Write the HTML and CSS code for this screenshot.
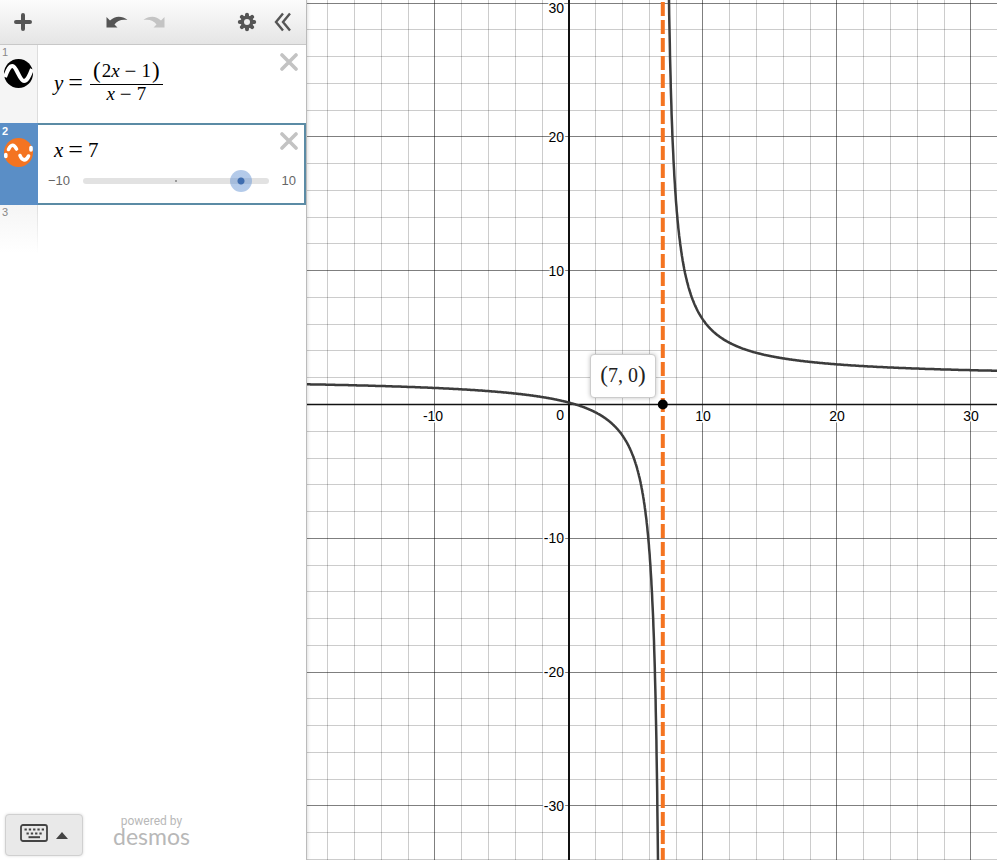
FILE: index.html
```html
<!DOCTYPE html>
<html lang="en">
<head>
<meta charset="utf-8">
<title>Graphing Calculator</title>
<meta name="viewport" content="width=device-width, initial-scale=1">
<link rel="stylesheet" href="styles.css">
</head>
<body>
<div class="calculator">
  <aside class="panel">
    <header class="toolbar">
      <button class="tool" type="button" aria-label="Add item">
        <svg width="18" height="18" viewBox="0 0 18 18"><path d="M9 2v14M2 9h14" stroke="#555" stroke-width="4" stroke-linecap="round"/></svg>
      </button>
      <div class="history">
        <button class="tool" type="button" aria-label="Undo">
          <svg width="22" height="14" viewBox="0 0 22 14"><path d="M.5 2V12.500H11.500L8.500 9.500C11 5.500 16 4 21.500 5C16 .5 9 .5 4 5.500Z" fill="#555"/></svg>
        </button>
        <button class="tool" type="button" aria-label="Redo" disabled>
          <svg width="22" height="14" viewBox="0 0 22 14"><path d="M21.500 2V12.500H10.500L13.500 9.500C11 5.500 6 4 .5 5C6 .5 13 .5 18 5.500Z" fill="#c4c4c4"/></svg>
        </button>
      </div>
      <div class="options">
        <button class="tool" type="button" aria-label="Settings">
          <svg width="20" height="20" viewBox="-10 -10 20 20">
            <path d="M0-7.200V7.200M-7.200 0H7.200M-5.100-5.100L5.100 5.100M5.100-5.100L-5.100 5.100" stroke="#555" stroke-width="4" stroke-linecap="round"/>
            <circle r="6.500" fill="#555"/><circle r="3" fill="#eee"/>
          </svg>
        </button>
        <button class="tool" type="button" aria-label="Hide list">
          <svg width="18" height="20" viewBox="0 0 18 20" fill="none" stroke="#555" stroke-width="2.400"><path d="M9 1.500L2 10L9 18.500M16 1.500L9 10L16 18.500"/></svg>
        </button>
      </div>
    </header>

    <ol class="expressions">
      <li class="row">
        <div class="gutter">
          <span class="number">1</span>
          <button class="curve-icon" type="button" aria-label="Hide curve 1">
            <svg width="29" height="29" viewBox="0 0 29 29"><circle cx="14.500" cy="14.500" r="14.500" fill="#000"/><path d="M1 18C4 10 5.500 7 8.500 7C12.500 7 15.500 22 20 22C23 22 25 18 28 10" fill="none" stroke="#fff" stroke-width="4"/></svg>
          </button>
        </div>
        <div class="content">
          <div class="math">
            <i>y</i><span class="op">=</span>
            <span class="fraction"><span class="numerator"><span class="paren">(</span>2<i>x</i><span class="op">−</span>1<span class="paren">)</span></span><span class="denominator"><i>x</i><span class="op">−</span>7</span></span>
          </div>
          <button class="remove" type="button" aria-label="Delete expression 1"><svg width="18" height="18" viewBox="0 0 18 18"><path d="M2 2L16 16M16 2L2 16" stroke="#c3c3c3" stroke-width="3.600" stroke-linecap="round"/></svg></button>
        </div>
      </li>
      <li class="row selected">
        <div class="gutter">
          <span class="number">2</span>
          <button class="curve-icon" type="button" aria-label="Hide curve 2">
            <svg width="29" height="29" viewBox="0 0 29 29"><circle cx="14.500" cy="14.500" r="14.500" fill="#f47421"/><path d="M4.500 11.500C7 6 10 6 12.500 11M16 17.500C18 23 22 23.500 24.500 18M1.800 16.500V18.500M27 9.500V12" fill="none" stroke="#fff" stroke-width="3.600" stroke-linecap="round"/></svg>
          </button>
        </div>
        <div class="content">
          <div class="math"><i>x</i><span class="op">=</span>7</div>
          <div class="slider">
            <span class="limit">−10</span>
            <div class="track"><input type="range" min="-10" max="10" value="7" aria-label="Value of x"></div>
            <span class="limit">10</span>
          </div>
          <button class="remove" type="button" aria-label="Delete expression 2"><svg width="18" height="18" viewBox="0 0 18 18"><path d="M2 2L16 16M16 2L2 16" stroke="#c3c3c3" stroke-width="3.600" stroke-linecap="round"/></svg></button>
        </div>
      </li>
      <li class="row empty">
        <div class="gutter"><span class="number">3</span></div>
        <div class="content"></div>
      </li>
    </ol>

    <footer class="footer">
      <button class="keypad" type="button" aria-label="Show keypad">
        <svg width="28" height="18" viewBox="0 0 28 18"><rect x="1" y="1" width="26" height="16" rx="2" fill="none" stroke="#444" stroke-width="1.800"/><path d="M4.500 5.500H24" stroke="#444" stroke-width="2" stroke-dasharray="2.300 2"/><path d="M6.500 9.500H22" stroke="#444" stroke-width="2" stroke-dasharray="2.300 2"/><path d="M8.500 13.200H20" stroke="#444" stroke-width="2"/></svg>
        <svg width="12" height="7" viewBox="0 0 12 7"><path d="M6 0L12 7H0Z" fill="#444"/></svg>
      </button>
      <div class="brand"><span class="powered">powered by</span><span class="name">desmos</span></div>
    </footer>
  </aside>

  <main class="graph">
    <svg class="plot" id="plot" role="img" aria-label="Graph of y = (2x-1)/(x-7) and x = 7"></svg>
    <div class="point-label"><span class="paren">(</span>7, 0<span class="paren">)</span></div>
  </main>
</div>
<script src="graph.js"></script>
</body>
</html>
```
FILE: styles.css
```css
* { box-sizing: border-box; }
body { margin: 0; background: #fff; font-family: "Liberation Sans", Arial, sans-serif; }
button { margin: 0; padding: 0; border: 0; background: none; cursor: pointer; font: inherit; }
svg { display: block; }

.calculator { display: flex; height: 100vh; }
.panel { flex: 0 0 307px; display: flex; flex-direction: column; border-right: 1px solid #bbb; box-shadow: 0 0 4px rgba(0, 0, 0, .2); z-index: 1; background: #fff; }

.toolbar { display: flex; align-items: center; height: 45px; padding: 0 14px; border-bottom: 1px solid #c8c8c8; background: linear-gradient(#fcfcfc, #e5e5e5); }
.history, .options { display: flex; align-items: center; gap: 15px; }
.history { margin-left: 74px; }
.options { margin-left: auto; gap: 17px; }

.expressions { flex: 1; margin: 0; padding: 0; list-style: none; }
.row { display: flex; height: 78px; }
.gutter { flex: 0 0 38px; padding: 1px 0 0 2px; border-right: 1px solid #ddd; background: #f5f5f5; }
.number { display: block; height: 12px; font-size: 11px; line-height: 12px; color: #888; }
.curve-icon { display: block; margin: 1px 0 0 2px; }
.content { position: relative; flex: 1; padding: 12px 16px; }
.remove { position: absolute; top: 8px; right: 8px; }

.selected { height: 82px; }
.selected .gutter { padding-top: 2px; border-color: #5a8ec6; background: #5a8ec6; }
.selected .number { font-weight: bold; color: #fff; }
.selected .content { padding: 12px 8px 0; border: 2px solid #5b8ba5; border-left: 0; }
.selected .remove { top: 7px; right: 6px; }
.selected .math { padding-left: 8px; }
.empty { height: 48px; }
.empty .gutter { border-image: linear-gradient(#ddd, #fff) 1; background: linear-gradient(#f5f5f5, #fff); }

.math { display: flex; align-items: center; font-family: "Liberation Serif", "Times New Roman", serif; font-size: 21px; line-height: 26px; color: #000; }
.op { margin: 0 5px; font-size: 26px; }
.fraction { display: flex; flex-direction: column; align-items: center; margin-left: 2px; font-size: 19px; }
.fraction .op { font-size: 21px; }
.numerator { display: flex; padding: 1px 2px 0; border-bottom: 1px solid #000; }
.denominator { display: flex; padding-bottom: 6px; line-height: 18px; }
.paren { font-size: 23px; }
.numerator .paren { margin: 0 1px; }

.slider { display: flex; align-items: center; margin: 7px 0 0 2px; font-size: 13px; line-height: 22px; color: #666; }
.track { position: relative; flex: 1; height: 6px; margin: 0 13px; border-radius: 3px; background: radial-gradient(circle at center, #999 1px, #e2e2e2 1px); }
.track input { position: absolute; top: -8px; left: -11px; width: calc(100% + 22px); height: 22px; margin: 0; appearance: none; background: none; }
.track input::-webkit-slider-thumb { appearance: none; width: 22px; height: 22px; border-radius: 50%; background: radial-gradient(circle, #3f6daf 3px, rgba(105, 150, 212, .5) 4px); }

.footer { display: flex; align-items: center; padding: 0 5px 4px; gap: 30px; }
.keypad { display: flex; align-items: center; justify-content: center; gap: 8px; width: 78px; height: 42px; border: 1px solid #d0d0d0; border-radius: 4px; background: #e9e9e9; box-shadow: 0 0 3px rgba(0, 0, 0, .15); }
.keypad svg:first-child { margin-top: -4px; }
.brand { display: flex; flex-direction: column; align-items: center; color: #b8b8b8; }
.powered { font-family: Roboto, sans-serif; font-size: 12px; line-height: 12px; }
.name { font-family: Lato, sans-serif; font-size: 23px; line-height: 18px; padding-bottom: 10px; }

.graph { position: relative; flex: 1; min-width: 0; overflow: hidden; }
.plot { width: 100%; height: 100%; }
.minor { stroke: #000; stroke-opacity: .2; }
.major { stroke: #000; stroke-opacity: .5; }
.axis { stroke: #111; stroke-width: 2; }
.axis-x { stroke: #111; stroke-width: 1.5; }
.curve { fill: none; stroke: #3c3c3c; stroke-width: 2.5; }
.asymptote { stroke: #f47421; stroke-width: 4; stroke-dasharray: 14 4; stroke-dashoffset: -2; }
.tick { font-size: 14px; fill: #000; stroke: #fff; stroke-width: 3; stroke-linejoin: round; paint-order: stroke; }
.point-label { position: absolute; left: 283px; top: 354px; width: 66px; height: 44px; border: 1px solid #ccc; border-radius: 4px; background: #fff; box-shadow: 0 0 4px rgba(0, 0, 0, .25); font-family: "Liberation Serif", "Times New Roman", serif; font-size: 20px; line-height: 40px; text-align: center; color: #222; }
```
FILE: graph.js
```js
const plot = document.getElementById('plot');
const origin = { x: 262, y: 404.5 };
const unit = { x: 13.4, y: 13.38 };

const toX = x => origin.x + x * unit.x;
const toY = y => origin.y - y * unit.y;

function add(name, attributes, text) {
  const node = document.createElementNS('http://www.w3.org/2000/svg', name);
  for (const key in attributes) node.setAttribute(key, attributes[key]);
  if (text !== undefined) node.textContent = text;
  plot.appendChild(node);
}

function line(x1, y1, x2, y2, kind) {
  add('line', { x1, y1, x2, y2, class: kind });
}

function curve(from, to) {
  const points = [];
  for (let x = from; x <= to; x += 0.02) {
    points.push(toX(x).toFixed(1) + ',' + toY((2 * x - 1) / (x - 7)).toFixed(1));
  }
  add('polyline', { points: points.join(' '), class: 'curve' });
}

function draw() {
  const { width, height } = plot.getBoundingClientRect();
  plot.replaceChildren();
  const left = Math.ceil(-origin.x / unit.x / 2) * 2;
  const right = (width - origin.x) / unit.x;
  const bottom = Math.ceil((origin.y - height) / unit.y / 2) * 2;
  const top = origin.y / unit.y;
  const snap = value => Math.floor(value) + 0.5;

  for (let x = left; x <= right; x += 2) {
    const column = Math.ceil(toX(x)) - 0.5 - (x % 10 ? 0 : 1) * (toX(x) % 1 > 0.01 ? 1 : 0);
    line(column, 0, column, height, x % 10 ? 'minor' : 'major');
  }
  for (let y = bottom; y <= top; y += 2) {
    line(0, snap(toY(y)), width, snap(toY(y)), y % 10 ? 'minor' : 'major');
  }
  line(0, snap(origin.y), width, snap(origin.y), 'axis-x');
  line(origin.x, 0, origin.x, height, 'axis');

  for (let x = Math.ceil(left / 10) * 10; x <= right; x += 10) {
    if (x) add('text', { x: toX(x) - (x < 0 ? 2 : 0), y: origin.y + 16, 'text-anchor': 'middle', class: 'tick' }, x);
  }
  for (let y = Math.ceil(bottom / 10) * 10; y <= top; y += 10) {
    const baseline = y ? Math.max(toY(y) + 5, 13) : origin.y + 15;
    add('text', { x: origin.x - 5, y: baseline, 'text-anchor': 'end', class: 'tick' }, y);
  }

  curve(left - 2, 6.9);
  curve(7.1, right + 1);
  line(toX(7), 0, toX(7), height, 'asymptote');
  add('circle', { cx: toX(7), cy: origin.y, r: 5, fill: '#000' });
}

draw();
window.addEventListener('resize', draw);
```
